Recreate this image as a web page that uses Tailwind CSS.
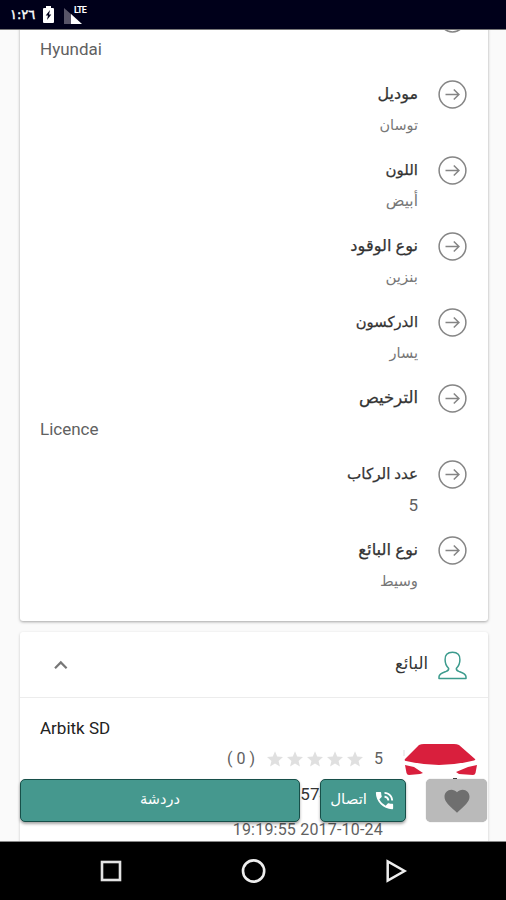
<!DOCTYPE html>
<html lang="ar">
<head>
<meta charset="utf-8">
<title>Arbitk</title>
<script src="https://cdn.jsdelivr.net/npm/@tailwindcss/browser@4"></script>
</head>
<body class="bg-[#fafafa]">
<svg class="hidden">
  <symbol id="arrow" viewBox="0 0 30 30"><g fill="none" stroke="#858585" stroke-width="1.5"><circle cx="14.5" cy="15.5" r="13.4"/><path d="M7.5 15.5H21M15.8 10.5L20.9 15.5L15.8 20.5"/></g></symbol>
  <symbol id="star" viewBox="0 0 20 20"><path fill="#e0e0e0" d="M10 2.2L12.2 7.5L18 8L13.6 11.9L14.9 17.6L10 14.6L5.1 17.6L6.4 11.9L2 8L7.8 7.5Z"/></symbol>
</svg>
<div class="relative flex h-[900px] w-[506px] flex-col overflow-hidden bg-[#fafafa] font-['Roboto','DejaVu_Sans',sans-serif]">
  <header class="z-10 flex h-[29px] shrink-0 items-center bg-[#00001a] pl-[10px] text-white shadow-[0_1px_0_#777]">
    <span class="w-[25px] whitespace-nowrap font-['DejaVu_Sans',sans-serif] text-[13px] leading-none [-webkit-text-stroke:0.4px_white]" dir="ltr">١:٢٦</span>
    <svg class="ml-[7px] h-[19px] w-[13px]" viewBox="0 0 13 19"><path fill="#fff" d="M4 1H9V3H11Q12 3 12 4V17Q12 18 11 18H2Q1 18 1 17V4Q1 3 2 3H4Z"/><path fill="#00001a" d="M8 5L3.7 10.5H6L5 15L9.3 9.5H7Z"/></svg>
    <div class="relative ml-[8px] h-[20px] w-[26px]">
      <svg class="h-[20px] w-[20px]" viewBox="0 0 20 20"><path fill="#585568" d="M1 3L9 10V19H1Z"/><path fill="#fff" d="M8 9L19 19H8Z"/></svg>
      <span class="absolute left-[11px] top-[1px] font-['Roboto',sans-serif] text-[9px] font-bold leading-none tracking-[-0.8px]">LTE</span>
    </div>
  </header>

  <main class="min-h-0 flex-1 overflow-hidden pl-5 pr-[18px]">
    <section class="-mt-[30px] h-[622px] rounded-[3px] bg-white shadow-[0_1px_3px_rgba(0,0,0,0.35)]">
      <ul class="px-5 text-right" id="specs"></ul>
    </section>

    <section class="mt-[11px] h-[260px] rounded-[3px] bg-white shadow-[0_1px_3px_rgba(0,0,0,0.2)]">
      <div class="flex h-[66px] items-center border-b border-[#ececec] px-5">
        <svg class="ml-[13px] h-[12px] w-[16px]" viewBox="0 0 16 12"><path d="M2 9.2L7.8 3.4L13.6 9.2" fill="none" stroke="#777" stroke-width="2.2"/></svg>
        <span class="ml-auto mr-[10px] text-[16.5px] text-[#333]" dir="rtl">البائع</span>
        <svg class="h-[32px] w-[30px]" viewBox="0 0 30 32"><path fill="none" stroke="#3c9b8d" stroke-width="1.5" stroke-linejoin="round" d="M14.5 3.2C9.4 3.2 6.7 6.2 7.1 10.8C7.1 14.8 8.7 17.6 10.6 19.2C11 21 10 21.8 8.2 22.4C4.3 23.8 1.2 24.6 1 27.8V29.5H28V27.8C27.8 24.6 24.7 23.8 20.8 22.4C19 21.8 18 21 18.4 19.2C20.3 17.6 21.9 14.8 21.9 10.8C22.3 6.2 19.6 3.2 14.5 3.2Z"/></svg>
      </div>
      <div class="flex justify-end pl-5 pr-[10px]">
        <span class="mr-auto pt-[19px] font-['Roboto',sans-serif] text-[17px] leading-[22px] text-[#222]">Arbitk SD</span>
        <div class="mr-[19px] flex w-[180px] flex-col items-end pt-[49px] text-[16px] text-[#616161]">
          <div class="flex h-[24px] items-center">
            <span class="mr-[6px] tracking-[4px]">(0)</span>
            <svg class="h-5 w-5"><use href="#star"/></svg><svg class="h-5 w-5"><use href="#star"/></svg><svg class="h-5 w-5"><use href="#star"/></svg><svg class="h-5 w-5"><use href="#star"/></svg><svg class="h-5 w-5"><use href="#star"/></svg>
            <span class="ml-[9px]">5</span>
          </div>
          <span class="mr-[54px] mt-[12px] h-[22px] text-[17px] leading-[22px] text-[#333]">574</span>
          <span class="mt-[14px] whitespace-nowrap leading-[22px] tracking-[0.2px]">19:19:55 2017-10-24</span>
        </div>
        <svg class="mt-[43px] h-[46px] w-[76px]" viewBox="0 0 76 46"><path fill="#d91f3d" d="M17 4Q19 3 22 3H52Q55 3 57 4L73 18Q74 19 72 19.5Q38 28 4 20Q2 19.5 3 18ZM3 24L12 26L21 32L18 33L7 34Q5 34 4.5 32ZM75 24L66 26L54 31L57 33L71 34Q73 34 73.5 32Z"/><path d="M2 9V15" stroke="#ddd"/><path d="M51 38H55" stroke="#333" stroke-width="2"/></svg>
      </div>
    </section>
  </main>

  <div class="absolute left-[20px] top-[779px] flex h-[43px] w-[467px]" dir="ltr">
    <button class="w-[280px] rounded-[5px] border-[1.5px] border-[#174f49] bg-[#45988e] pb-[2px] text-[14.5px] text-white shadow-[0_2px_3px_rgba(0,0,0,0.35)]">دردشة</button>
    <button class="ml-[20px] flex w-[86px] items-center justify-end rounded-[5px] border-[1.5px] border-[#174f49] bg-[#45988e] pr-[9px] text-[15px] text-white shadow-[0_2px_3px_rgba(0,0,0,0.35)]">
      <span class="mr-[6px] pb-[3px]">اتصال</span>
      <svg class="h-[23px] w-[23px]" viewBox="0 0 24 24" fill="#fff"><path d="M20 15.5c-1.25 0-2.45-.2-3.57-.57-.35-.11-.74-.03-1.02.24l-2.2 2.2c-2.83-1.44-5.15-3.75-6.59-6.58l2.2-2.21c.28-.27.36-.66.25-1.01C8.7 6.45 8.5 5.25 8.5 4c0-.55-.45-1-1-1H4c-.55 0-1 .45-1 1 0 9.39 7.61 17 17 17 .55 0 1-.45 1-1v-3.5c0-.55-.45-1-1-1zM19 12h2c0-4.97-4.03-9-9-9v2c3.87 0 7 3.13 7 7zm-4 0h2c0-2.76-2.24-5-5-5v2c1.66 0 3 1.34 3 3z"/></svg>
    </button>
    <button class="ml-[20px] flex w-[61px] items-center justify-center rounded-[5px] bg-[#bababa] shadow-[0_0_1px_#999]">
      <svg class="h-[30px] w-[30px]" viewBox="0 0 24 24"><path fill="#6f6f6f" d="M12 21.35l-1.45-1.32C5.4 15.36 2 12.28 2 8.5 2 5.42 4.42 3 7.5 3c1.74 0 3.41.81 4.5 2.09C13.09 3.81 14.76 3 16.5 3 19.58 3 22 5.42 22 8.5c0 3.78-3.4 6.86-8.55 11.54L12 21.35z"/></svg>
    </button>
  </div>

  <nav class="z-10 flex h-[59px] shrink-0 items-center border-t border-[#888] bg-black">
    <svg class="ml-[98px] h-[26px] w-[26px]" viewBox="0 0 26 26"><rect x="4" y="4" width="18" height="18" fill="none" stroke="#e3e3e3" stroke-width="2.6"/></svg>
    <svg class="ml-[117px] h-[26px] w-[26px]" viewBox="0 0 26 26"><circle cx="12.6" cy="13" r="10.6" fill="none" stroke="#eee" stroke-width="2.6"/></svg>
    <svg class="ml-[116px] h-[26px] w-[26px]" viewBox="0 0 26 26"><path d="M4.7 3.5V22.5L21.5 13Z" fill="none" stroke="#eee" stroke-width="2.5"/></svg>
  </nav>
</div>
<script>
const specs = [
  ['', 'Hyundai', 15, 17], ['موديل', 'توسان', 16, 14.4], ['اللون', 'أبيض', 15, 15.5], ['نوع الوقود', 'بنزين', 16.2, 15],
  ['الدركسون', 'يسار', 14.8, 14.5], ['الترخيص', 'Licence', 16.5, 17], ['عدد الركاب', '5', 15.2, 17], ['نوع البائع', 'وسيط', 16.4, 14.8]
];
document.getElementById('specs').innerHTML = specs.map(([k, v, ks, vs]) => {
  const latin = /[A-Za-z]/.test(v);
  return `<li class="h-[76px]">
    <div class="flex h-[38px] items-center justify-end gap-[20px]"><span class="font-medium text-[#333] [-webkit-text-stroke:0.25px_#333]" style="font-size:${ks}px" dir="rtl">${k}</span><svg class="h-[30px] w-[30px]"><use href="#arrow"/></svg></div>
    <div class="h-[24px] leading-[25px] ${latin ? 'text-left text-[#616161]' : v === '5' ? 'pr-[50px] text-[#616161]' : 'pr-[50px] text-[#777]'}" style="font-size:${vs}px">${v}</div>
  </li>`;
}).join('');
</script>
</body>
</html>
